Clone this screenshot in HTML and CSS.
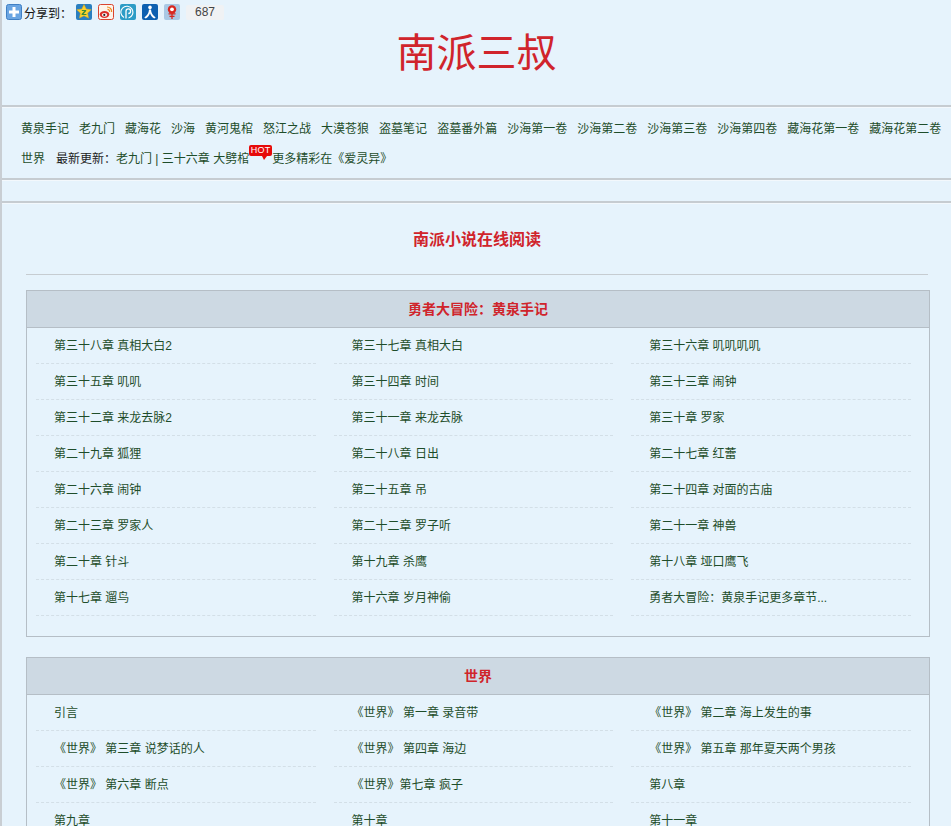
FILE: index.html
```html
<!DOCTYPE html>
<html lang="zh-CN">
<head>
<meta charset="utf-8">
<title>南派三叔</title>
<link rel="stylesheet" href="styles.css">
</head>
<body>
<div class="page">
  <header class="top">
    <div class="share">
      <svg class="ico ico-plus" viewBox="0 0 16 16"><rect x=".5" y=".5" width="15" height="15" rx="2" fill="#6aa5e2" stroke="#3f7fc4"/><rect x="6.500" y="3" width="3" height="10" fill="#fff"/><rect x="3" y="6.500" width="10" height="3" fill="#fff"/></svg>
      <span class="share-label">分享到：</span>
      <svg class="ico" viewBox="0 0 16 16"><rect width="16" height="16" rx="2" fill="#2a7fc0"/><path d="M8 .5l2.200 4.600 5 .6-3.600 3.400.9 5L8 11.700l-4.500 2.400.9-5L.8 5.700l5-.6z" fill="#fbd22e" stroke="#e9a913" stroke-width=".5"/><path d="M5.800 6h4.400v1.100L7.600 10h2.800v1.100H5.600V10l2.600-2.900H5.800z" fill="#3a8a3a"/></svg>
      <svg class="ico" viewBox="0 0 16 16"><rect x=".5" y=".5" width="15" height="15" rx="2" fill="#fdf4ea" stroke="#d9442f"/><ellipse cx="6.500" cy="10.500" rx="4.800" ry="3.400" fill="#d9302a"/><ellipse cx="6.500" cy="10.800" rx="2.600" ry="1.900" fill="#fff"/><circle cx="6.300" cy="10.900" r="1.100" fill="#222"/><path d="M9 3a4.500 4.500 0 0 1 4.600 5M9.500 5.300a2 2 0 0 1 2 2.500" fill="none" stroke="#ee8a1c" stroke-width="1.200"/></svg>
      <svg class="ico" viewBox="0 0 16 16"><rect width="16" height="16" rx="2" fill="#2c9cc6"/><path d="M4 13.500A6 6 0 1 1 8.500 14" fill="none" stroke="#fff" stroke-width="1.100"/><path d="M6 14.500V7a2.300 2.300 0 1 1 2.300 2.500" fill="none" stroke="#fff" stroke-width="1.300"/></svg>
      <svg class="ico" viewBox="0 0 16 16"><rect width="16" height="16" rx="2" fill="#0c5fb0"/><circle cx="8" cy="3.400" r="1.800" fill="#fff"/><path d="M7 5.600h2c.2 3.600 1.700 6 4.700 7.800l-1.500 1.100C10.100 13.400 8.700 11.400 8 9.300c-.7 2.100-2.100 4.100-4.200 5.200l-1.500-1.100C5.300 11.600 6.800 9.200 7 5.600z" fill="#fff"/></svg>
      <svg class="ico" viewBox="0 0 16 16"><rect width="16" height="16" rx="2" fill="#a9c8e4"/><circle cx="8" cy="5.500" r="4.200" fill="#d8261f"/><circle cx="8" cy="5.300" r="1.900" fill="#fff"/><path d="M4.500 9.800h7M8 9v6M5.500 12.300h5" stroke="#d8261f" stroke-width="1.300" fill="none"/></svg>
      <span class="share-count">687</span>
    </div>
    <h1 class="site-title">南派三叔</h1>
  </header>

  <nav class="nav">
    <a>黄泉手记</a><a>老九门</a><a>藏海花</a><a>沙海</a><a>黄河鬼棺</a><a>怒江之战</a><a>大漠苍狼</a><a>盗墓笔记</a><a>盗墓番外篇</a><a>沙海第一卷</a><a>沙海第二卷</a><a>沙海第三卷</a><a>沙海第四卷</a><a>藏海花第一卷</a><a>藏海花第二卷</a><a>世界</a>
    <span class="latest"><span class="latest-label">最新更新：</span>老九门 | 三十六章 大劈棺<span class="hot"><span class="hot-bubble">HOT</span></span>更多精彩在《爱灵异》</span>
  </nav>

  <div class="strip"></div>

  <main class="content">
    <h2 class="page-heading">南派小说在线阅读</h2>

    <section class="book">
      <h3 class="book-title">勇者大冒险：黄泉手记</h3>
      <ul class="chapters">
        <li>第三十八章 真相大白2</li><li>第三十七章 真相大白</li><li>第三十六章 叽叽叽叽</li>
        <li>第三十五章 叽叽</li><li>第三十四章 时间</li><li>第三十三章 闹钟</li>
        <li>第三十二章 来龙去脉2</li><li>第三十一章 来龙去脉</li><li>第三十章 罗家</li>
        <li>第二十九章 狐狸</li><li>第二十八章 日出</li><li>第二十七章 红蕾</li>
        <li>第二十六章 闹钟</li><li>第二十五章 吊</li><li>第二十四章 对面的古庙</li>
        <li>第二十三章 罗家人</li><li>第二十二章 罗子听</li><li>第二十一章 神兽</li>
        <li>第二十章 针斗</li><li>第十九章 杀鹰</li><li>第十八章 垭口鹰飞</li>
        <li>第十七章 遛鸟</li><li>第十六章 岁月神偷</li><li>勇者大冒险：黄泉手记更多章节...</li>
      </ul>
    </section>

    <section class="book">
      <h3 class="book-title">世界</h3>
      <ul class="chapters">
        <li>引言</li><li>《世界》 第一章 录音带</li><li>《世界》 第二章 海上发生的事</li>
        <li>《世界》 第三章 说梦话的人</li><li>《世界》 第四章 海边</li><li>《世界》 第五章 那年夏天两个男孩</li>
        <li>《世界》 第六章 断点</li><li>《世界》第七章 疯子</li><li>第八章</li>
        <li>第九章</li><li>第十章</li><li>第十一章</li>
      </ul>
    </section>
  </main>
</div>
</body>
</html>
```
FILE: styles.css
```css
* { box-sizing: border-box; }
html, body { margin: 0; padding: 0; height: 100%; overflow: hidden; }
body {
  background: #e6f3fc;
  color: #1e4d2a;
  font: 12px/1.5 "Liberation Sans", "Noto Sans CJK SC", sans-serif;
}
.page { border-left: 2px solid #c9ced3; min-height: 100%; }

.top { height: 105px; }
.share {
  display: flex;
  align-items: flex-start;
  padding: 4px 0 0 4px;
  height: 24px;
  color: #111;
}
.ico { width: 16px; height: 16px; flex: none; margin-right: 6px; display: block; }
.ico-plus { margin-right: 2px; }
.share-label { width: 52px; line-height: 21px; }
.share-count {
  width: 38px;
  height: 15px;
  margin-top: 1px;
  background: #f0f2f4;
  color: #444;
  font-size: 12px;
  line-height: 15px;
  text-align: center;
  border-radius: 2px;
}
.site-title {
  margin: 1px 0 0;
  text-align: center;
  color: #d0242b;
  font: 400 40px/50px "Noto Sans CJK SC", sans-serif;
}

.nav {
  border-top: 2px solid #c6ccd1;
  border-bottom: 2px solid #c6ccd1;
  box-shadow: inset 0 1px 0 #f3f8fc, 0 1px 0 #f3f8fc;
  padding: 7px 0 0 19px;
  height: 75px;
  display: flex;
  flex-wrap: wrap;
  column-gap: 10px;
  line-height: 30px;
  align-content: flex-start;
}
.latest { margin-left: 1px; }
.latest-label { color: #222; }
.hot { display: inline-block; width: 23px; position: relative; }
.hot-bubble {
  position: absolute;
  left: 0;
  top: -18px;
  width: 23px;
  height: 11px;
  background: #e60a0a;
  color: #fff;
  border-radius: 2px;
  font: 9px/11px "Liberation Sans", sans-serif;
  letter-spacing: .3px;
  text-align: center;
}
.hot-bubble::after {
  content: "";
  position: absolute;
  left: 13px;
  top: 11px;
  border-left: 2px solid transparent;
  border-right: 3px solid transparent;
  border-top: 4px solid #e60a0a;
}

.strip { height: 23px; border-bottom: 2px solid #c6ccd1; box-shadow: 0 1px 0 #f3f8fc; }

.content { padding: 1px 21px 0 24px; }
.page-heading {
  margin: 0 2px 15px 0;
  height: 71px;
  padding-top: 24px;
  text-align: center;
  color: #d0242b;
  font-size: 16px;
  line-height: 24px;
  font-weight: 700;
  border-bottom: 1px solid #c6ccd1;
}
.book { border: 1px solid #b5bec6; margin-bottom: 20px; }
.book-title {
  margin: 0;
  height: 37px;
  line-height: 36px;
  background: #cdd9e3;
  border-bottom: 1px solid #b5bec6;
  text-align: center;
  color: #d0242b;
  font-size: 14px;
  font-weight: 700;
}
.chapters {
  list-style: none;
  margin: 0;
  padding: 0 0 20px 9px;
  display: flex;
  flex-wrap: wrap;
  column-gap: 18px;
}
.chapters li {
  width: 279.6px;
  height: 36px;
  line-height: 36px;
  padding-left: 18px;
  border-bottom: 1px dashed #d3dfe7;
  white-space: nowrap;
}
```
